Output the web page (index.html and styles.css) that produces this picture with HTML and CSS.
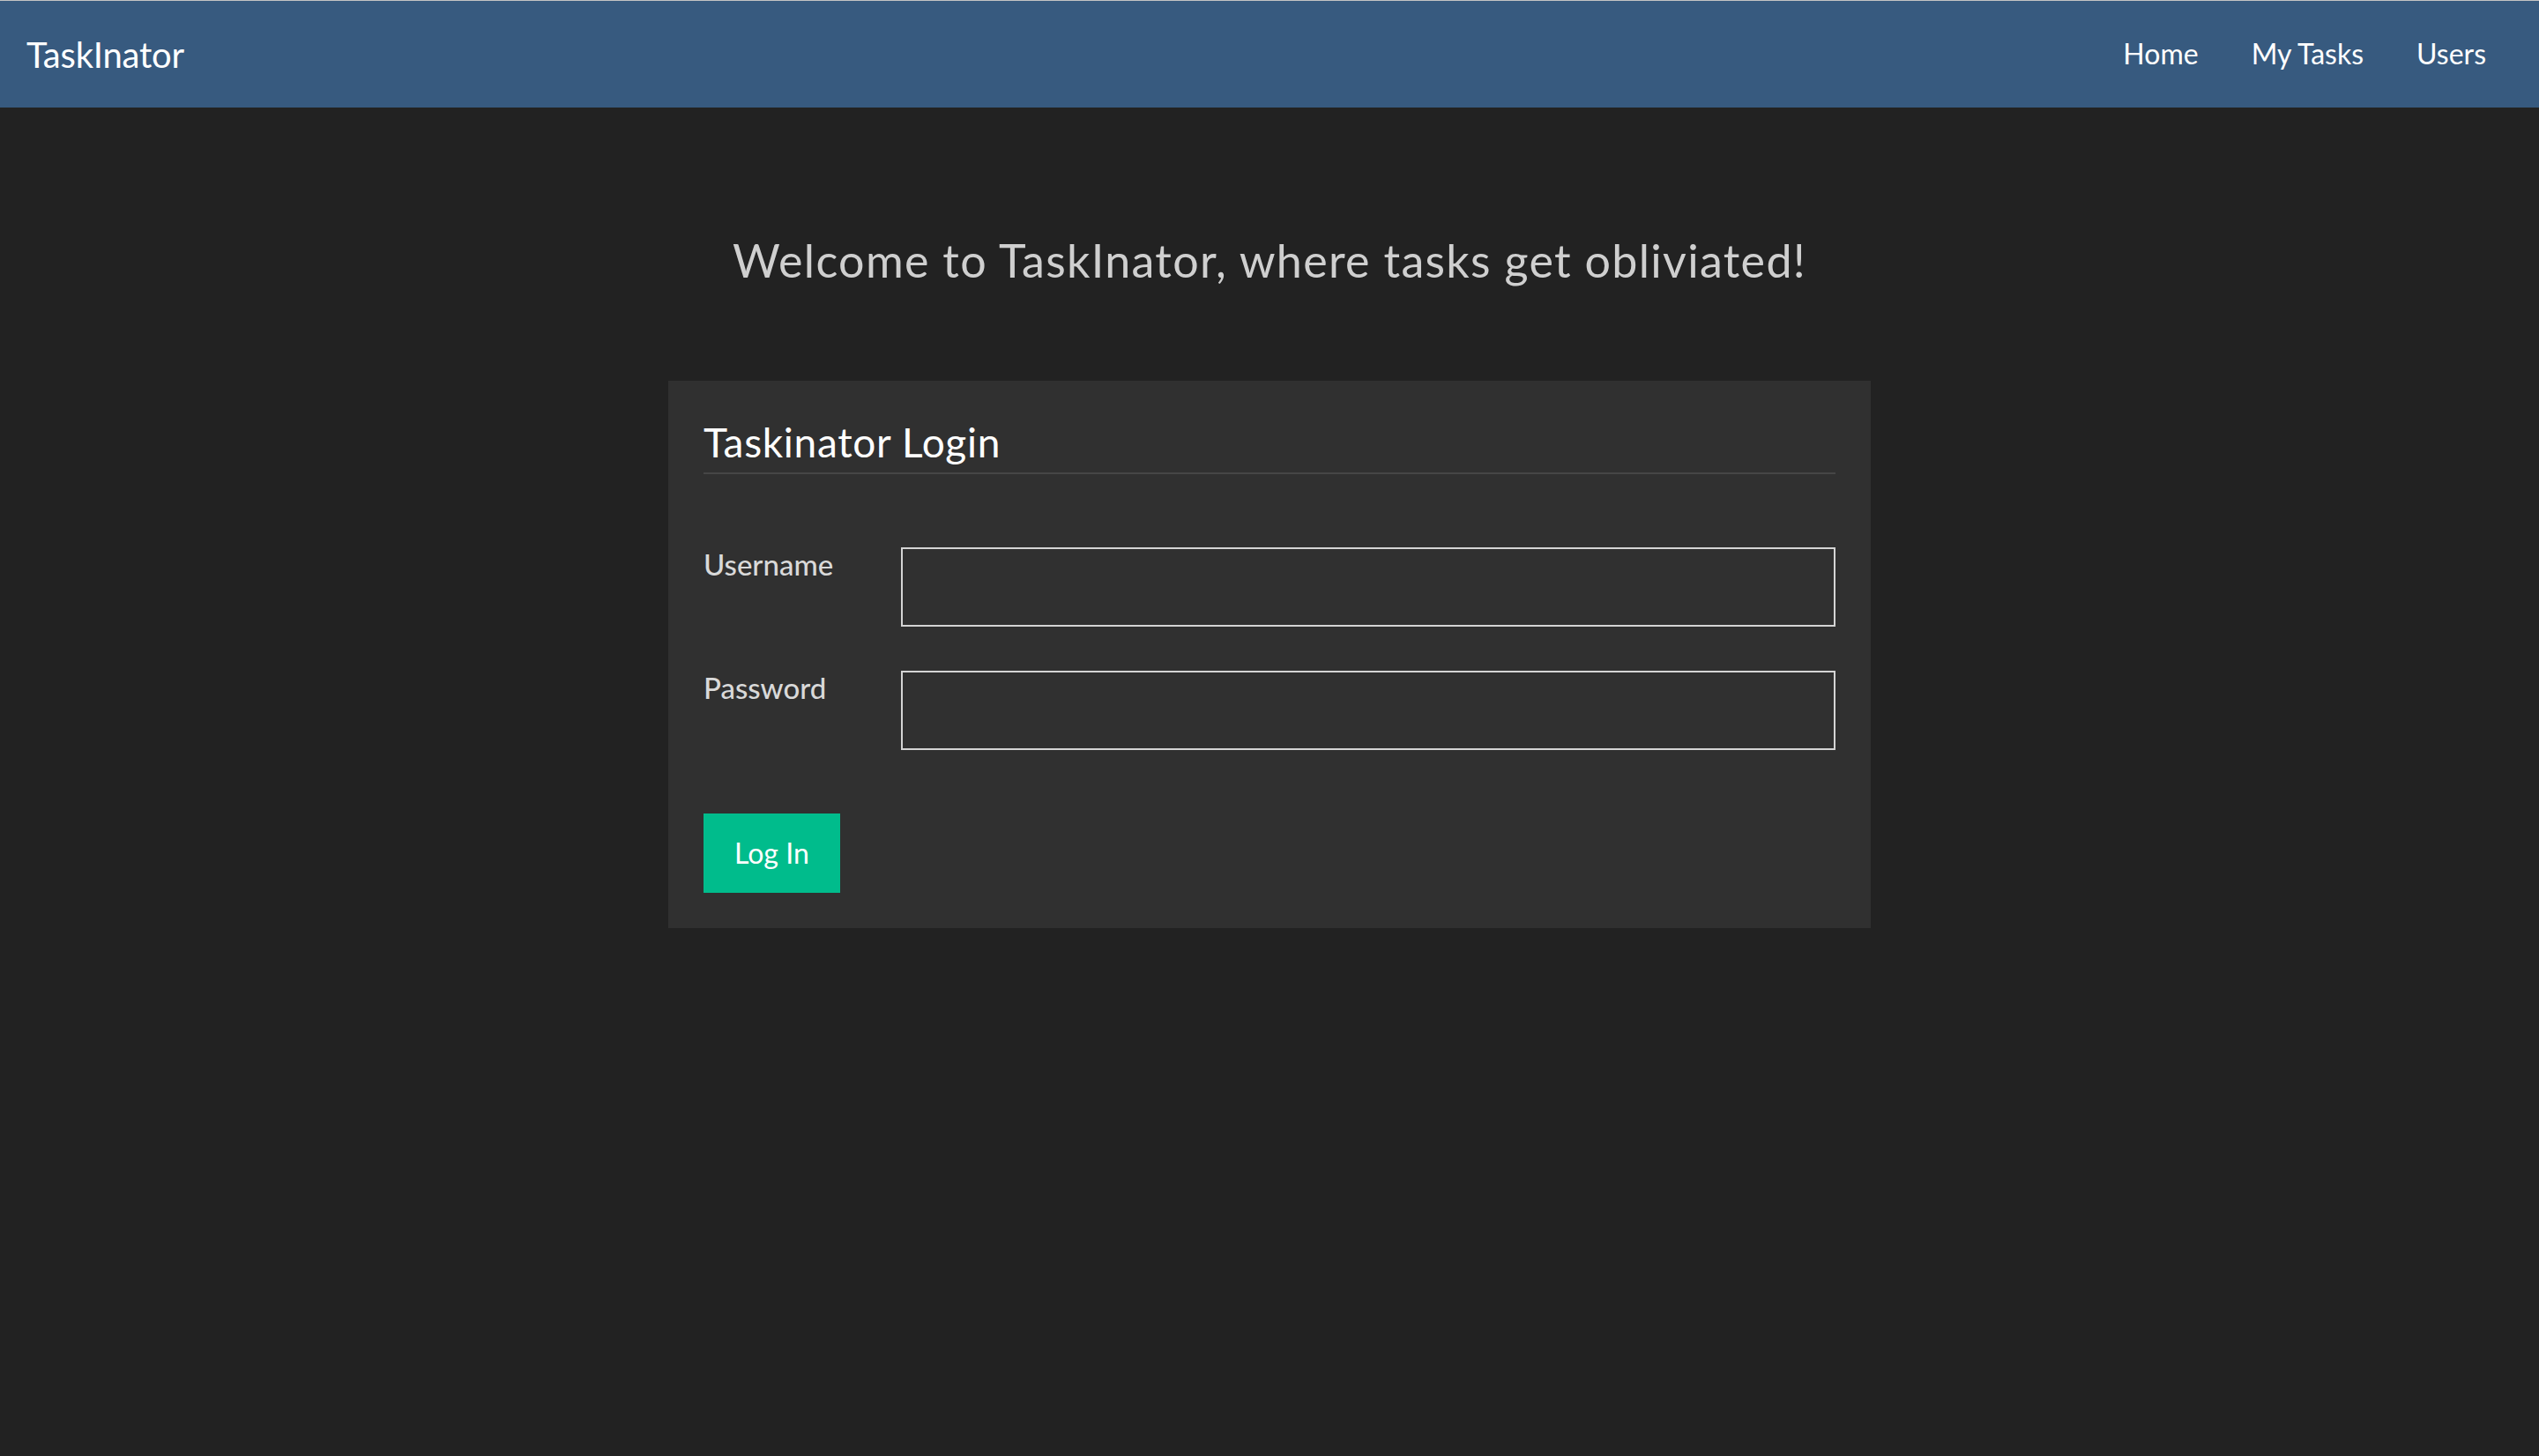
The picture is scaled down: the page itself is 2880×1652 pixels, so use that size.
FILE: index.html
```html
<!DOCTYPE html>
<html lang="en">
<head>
<meta charset="utf-8">
<title>TaskInator</title>
<link rel="stylesheet" href="styles.css">
</head>
<body>
<nav class="navbar">
  <a class="brand" href="#">TaskInator</a>
  <ul class="nav-links">
    <li><a href="#">Home</a></li>
    <li><a href="#">My Tasks</a></li>
    <li><a href="#">Users</a></li>
  </ul>
</nav>
<main class="main">
  <h1 class="welcome">Welcome to TaskInator, where tasks get obliviated!</h1>
  <section class="card">
    <h2 class="card-title">Taskinator Login</h2>
    <form class="login-form">
      <label class="form-label" for="username">Username</label>
      <input class="form-input" id="username" type="text">
      <label class="form-label" for="password">Password</label>
      <input class="form-input" id="password" type="password">
      <div class="form-actions">
        <button class="btn-login" type="button">Log In</button>
      </div>
    </form>
  </section>
</main>
</body>
</html>
```

FILE: styles.css
```css
* {
  box-sizing: border-box;
}

html, body {
  margin: 0;
  padding: 0;
}

body {
  background: #222222;
  font-family: "Lato", "Open Sans", sans-serif;
  color: #ffffff;
  min-height: 1652px;
}

.navbar {
  display: flex;
  align-items: center;
  justify-content: space-between;
  height: 122px;
  background: #375a7f;
  border-top: 1px solid #c4c4c4;
  padding: 0 30px 0 30px;
}

.brand {
  color: #ffffff;
  text-decoration: none;
  font-size: 40px;
  line-height: 1.2;
  letter-spacing: -0.2px;
}

.nav-links {
  display: flex;
  list-style: none;
  margin: 0;
  padding: 0;
}

.nav-links a {
  display: block;
  color: #ffffff;
  text-decoration: none;
  font-size: 32px;
  line-height: 1.2;
  padding: 0 30px;
}

.main {
  display: flex;
  flex-direction: column;
  align-items: center;
}

.welcome {
  margin: 142px 0 106px;
  font-size: 52px;
  line-height: 1.2;
  font-weight: 400;
  letter-spacing: 1.3px;
  color: #cfcfcf;
}

.card {
  width: 1364px;
  background: #303030;
  padding: 0 40px 40px;
}

.card-title {
  margin: 42px 0 0;
  padding-bottom: 6px;
  border-bottom: 2px solid #464646;
  font-size: 46px;
  line-height: 1.2;
  font-weight: 400;
  letter-spacing: 0.7px;
  color: #ffffff;
}

.login-form {
  display: grid;
  grid-template-columns: 224px 1fr;
  row-gap: 50px;
  margin-top: 83px;
}

.form-label {
  font-size: 33px;
  line-height: 1.2;
  font-weight: 500;
  color: #d9d9d9;
}

.form-input {
  height: 90px;
  background: #303030;
  border: 2px solid #d4d4d4;
  color: #ffffff;
  font: inherit;
  font-size: 32px;
  padding: 0 20px;
  outline: none;
}

.form-actions {
  grid-column: 1 / -1;
  margin-top: 22px;
}

.btn-login {
  height: 90px;
  background: #00bc8c;
  border: none;
  color: #ffffff;
  font-family: inherit;
  font-size: 32px;
  padding: 0 35px;
  cursor: pointer;
}
```
